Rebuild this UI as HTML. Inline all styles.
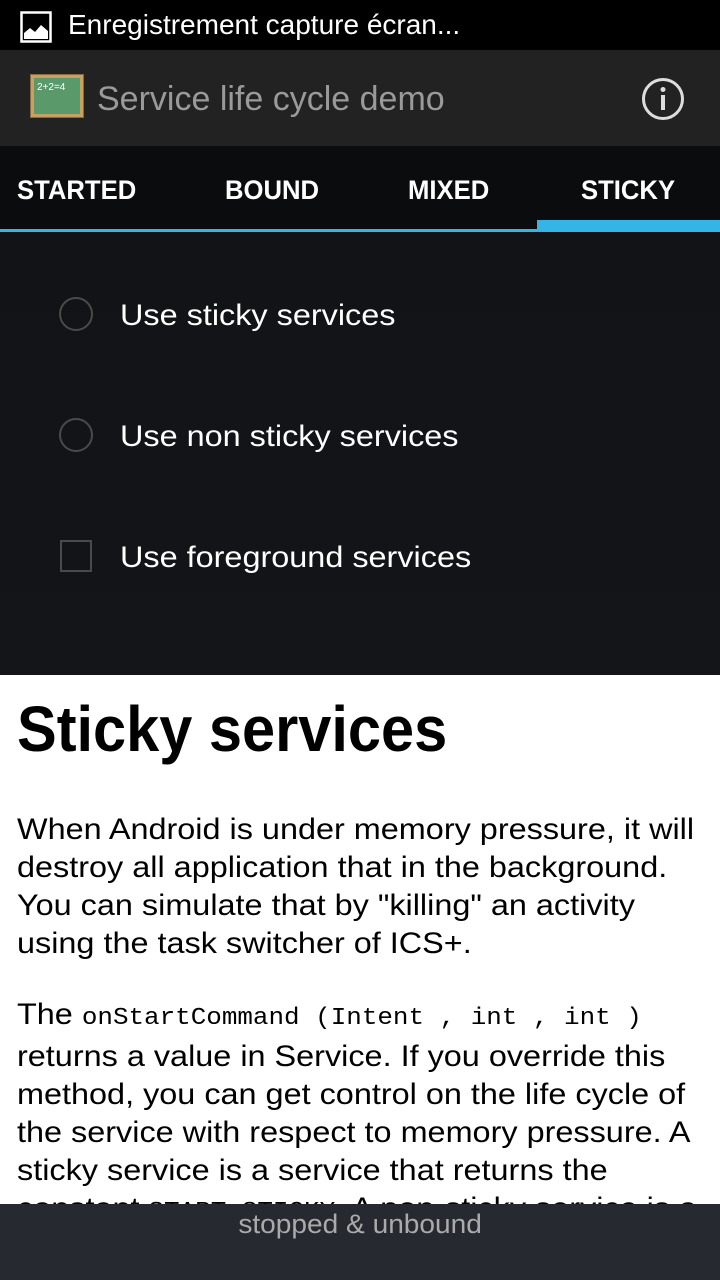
<!DOCTYPE html>
<html><head><meta charset="utf-8"><style>
*{margin:0;padding:0;box-sizing:border-box}
body{width:720px;height:1280px;overflow:hidden;position:relative;background:#fff;font-family:"Liberation Sans",sans-serif}
.a{position:absolute;white-space:nowrap}
.n{transform-origin:left center;display:inline-block}
.m{font-family:"Liberation Mono",monospace;font-size:24px}
</style></head><body>
<div class="a" style="left:0;top:0;width:720px;height:50px;background:#000"></div>
<svg class="a" style="left:20px;top:11px" width="32" height="32" viewBox="0 0 32 32"><rect x="1.5" y="1.5" width="29" height="29" fill="none" stroke="#fff" stroke-width="2.5"/><path d="M4 28 L4 22 L10 17 L15 21 L21 14 L28 20 L28 28Z" fill="#fff"/></svg>
<div class="a" style="left:68px;top:9px;color:#fff;font-size:28px"><span class="n" style="transform:scaleX(1)">Enregistrement capture écran...</span></div>
<div class="a" style="left:0;top:50px;width:720px;height:96px;background:#222"></div>
<div class="a" style="left:30px;top:74px;width:54px;height:44px;background:#c9a064;border:1px solid #8a6a3a"></div>
<div class="a" style="left:34px;top:78px;width:46px;height:36px;background:#5a9a6a"></div>
<div class="a" style="left:37px;top:82px;color:#fff;font-size:10px">2+2=4</div>
<div class="a" style="left:97px;top:80px;color:#9a9a9a;font-size:34px"><span class="n" style="transform:scaleX(1)">Service life cycle demo</span></div>
<svg class="a" style="left:641px;top:77px" width="44" height="44" viewBox="0 0 44 44"><circle cx="22" cy="22" r="19.5" fill="none" stroke="#ddd" stroke-width="3"/><rect x="20" y="18" width="4" height="15" fill="#ddd"/><circle cx="22" cy="12.5" r="2.5" fill="#ddd"/></svg>
<div class="a" style="left:0;top:146px;width:720px;height:86px;background:#0b0c0d"></div>
<div class="a" style="left:17px;top:175px;color:#fff;font-size:27px;font-weight:bold"><span class="n" style="transform:scaleX(.95)">STARTED</span></div>
<div class="a" style="left:225px;top:175px;color:#fff;font-size:27px;font-weight:bold"><span class="n" style="transform:scaleX(.95)">BOUND</span></div>
<div class="a" style="left:408px;top:175px;color:#fff;font-size:27px;font-weight:bold"><span class="n" style="transform:scaleX(.95)">MIXED</span></div>
<div class="a" style="left:581px;top:175px;color:#fff;font-size:27px;font-weight:bold"><span class="n" style="transform:scaleX(.95)">STICKY</span></div>
<div class="a" style="left:0;top:229px;width:720px;height:3px;background:#33b5e5"></div>
<div class="a" style="left:537px;top:220px;width:183px;height:12px;background:#33b5e5"></div>
<div class="a" style="left:0;top:232px;width:720px;height:443px;background:linear-gradient(#121316,#131519)"></div>
<div class="a" style="left:59px;top:297px;width:34px;height:34px;border:2px solid #4a4a4a;border-radius:50%"></div>
<div class="a" style="left:59px;top:418px;width:34px;height:34px;border:2px solid #4a4a4a;border-radius:50%"></div>
<div class="a" style="left:60px;top:540px;width:32px;height:32px;border:2px solid #4a4a4a"></div>
<div class="a" style="left:120px;top:299px;color:#fff;font-size:30px"><span class="n" style="transform:scaleX(1.08)">Use sticky services</span></div>
<div class="a" style="left:120px;top:420px;color:#fff;font-size:30px"><span class="n" style="transform:scaleX(1.08)">Use non sticky services</span></div>
<div class="a" style="left:120px;top:541px;color:#fff;font-size:30px"><span class="n" style="transform:scaleX(1.08)">Use foreground services</span></div>
<div class="a" style="left:17px;top:692px;color:#000;font-size:64px;font-weight:bold"><span class="n" style="transform:scaleX(.93)">Sticky services</span></div>
<div style="position:absolute;left:17px;top:811px;color:#000;font-size:30px;line-height:38px;white-space:nowrap">
<div><span class="n" style="transform:scaleX(1.08)">When Android is under memory pressure, it will</span></div>
<div><span class="n" style="transform:scaleX(1.08)">destroy all application that in the background.</span></div>
<div><span class="n" style="transform:scaleX(1.08)">You can simulate that by "killing" an activity</span></div>
<div><span class="n" style="transform:scaleX(1.08)">using the task switcher of ICS+.</span></div>
</div>
<div style="position:absolute;left:17px;top:996px;color:#000;font-size:30px;line-height:38px;white-space:nowrap">
<div><span class="n" style="transform:scaleX(1.08)">The <span class="m">onStartCommand (Intent , int , int )</span></span></div>
<div><span class="n" style="transform:scaleX(1.08)">returns a value in Service. If you override this</span></div>
<div><span class="n" style="transform:scaleX(1.08)">method, you can get control on the life cycle of</span></div>
<div><span class="n" style="transform:scaleX(1.08)">the service with respect to memory pressure. A</span></div>
<div><span class="n" style="transform:scaleX(1.08)">sticky service is a service that returns the</span></div>
<div><span class="n" style="transform:scaleX(1.08)">constant <span class="m">START_STICKY</span>. A non-sticky service is a</span></div>
</div>
<div class="a" style="left:0;top:1204px;width:720px;height:76px;background:#262a30"></div>
<div class="a" style="left:0;top:1209px;width:720px;text-align:center;color:#aaa;font-size:27px"><span class="n" style="transform:scaleX(1.04);transform-origin:center">stopped &amp; unbound</span></div>
</body></html>
